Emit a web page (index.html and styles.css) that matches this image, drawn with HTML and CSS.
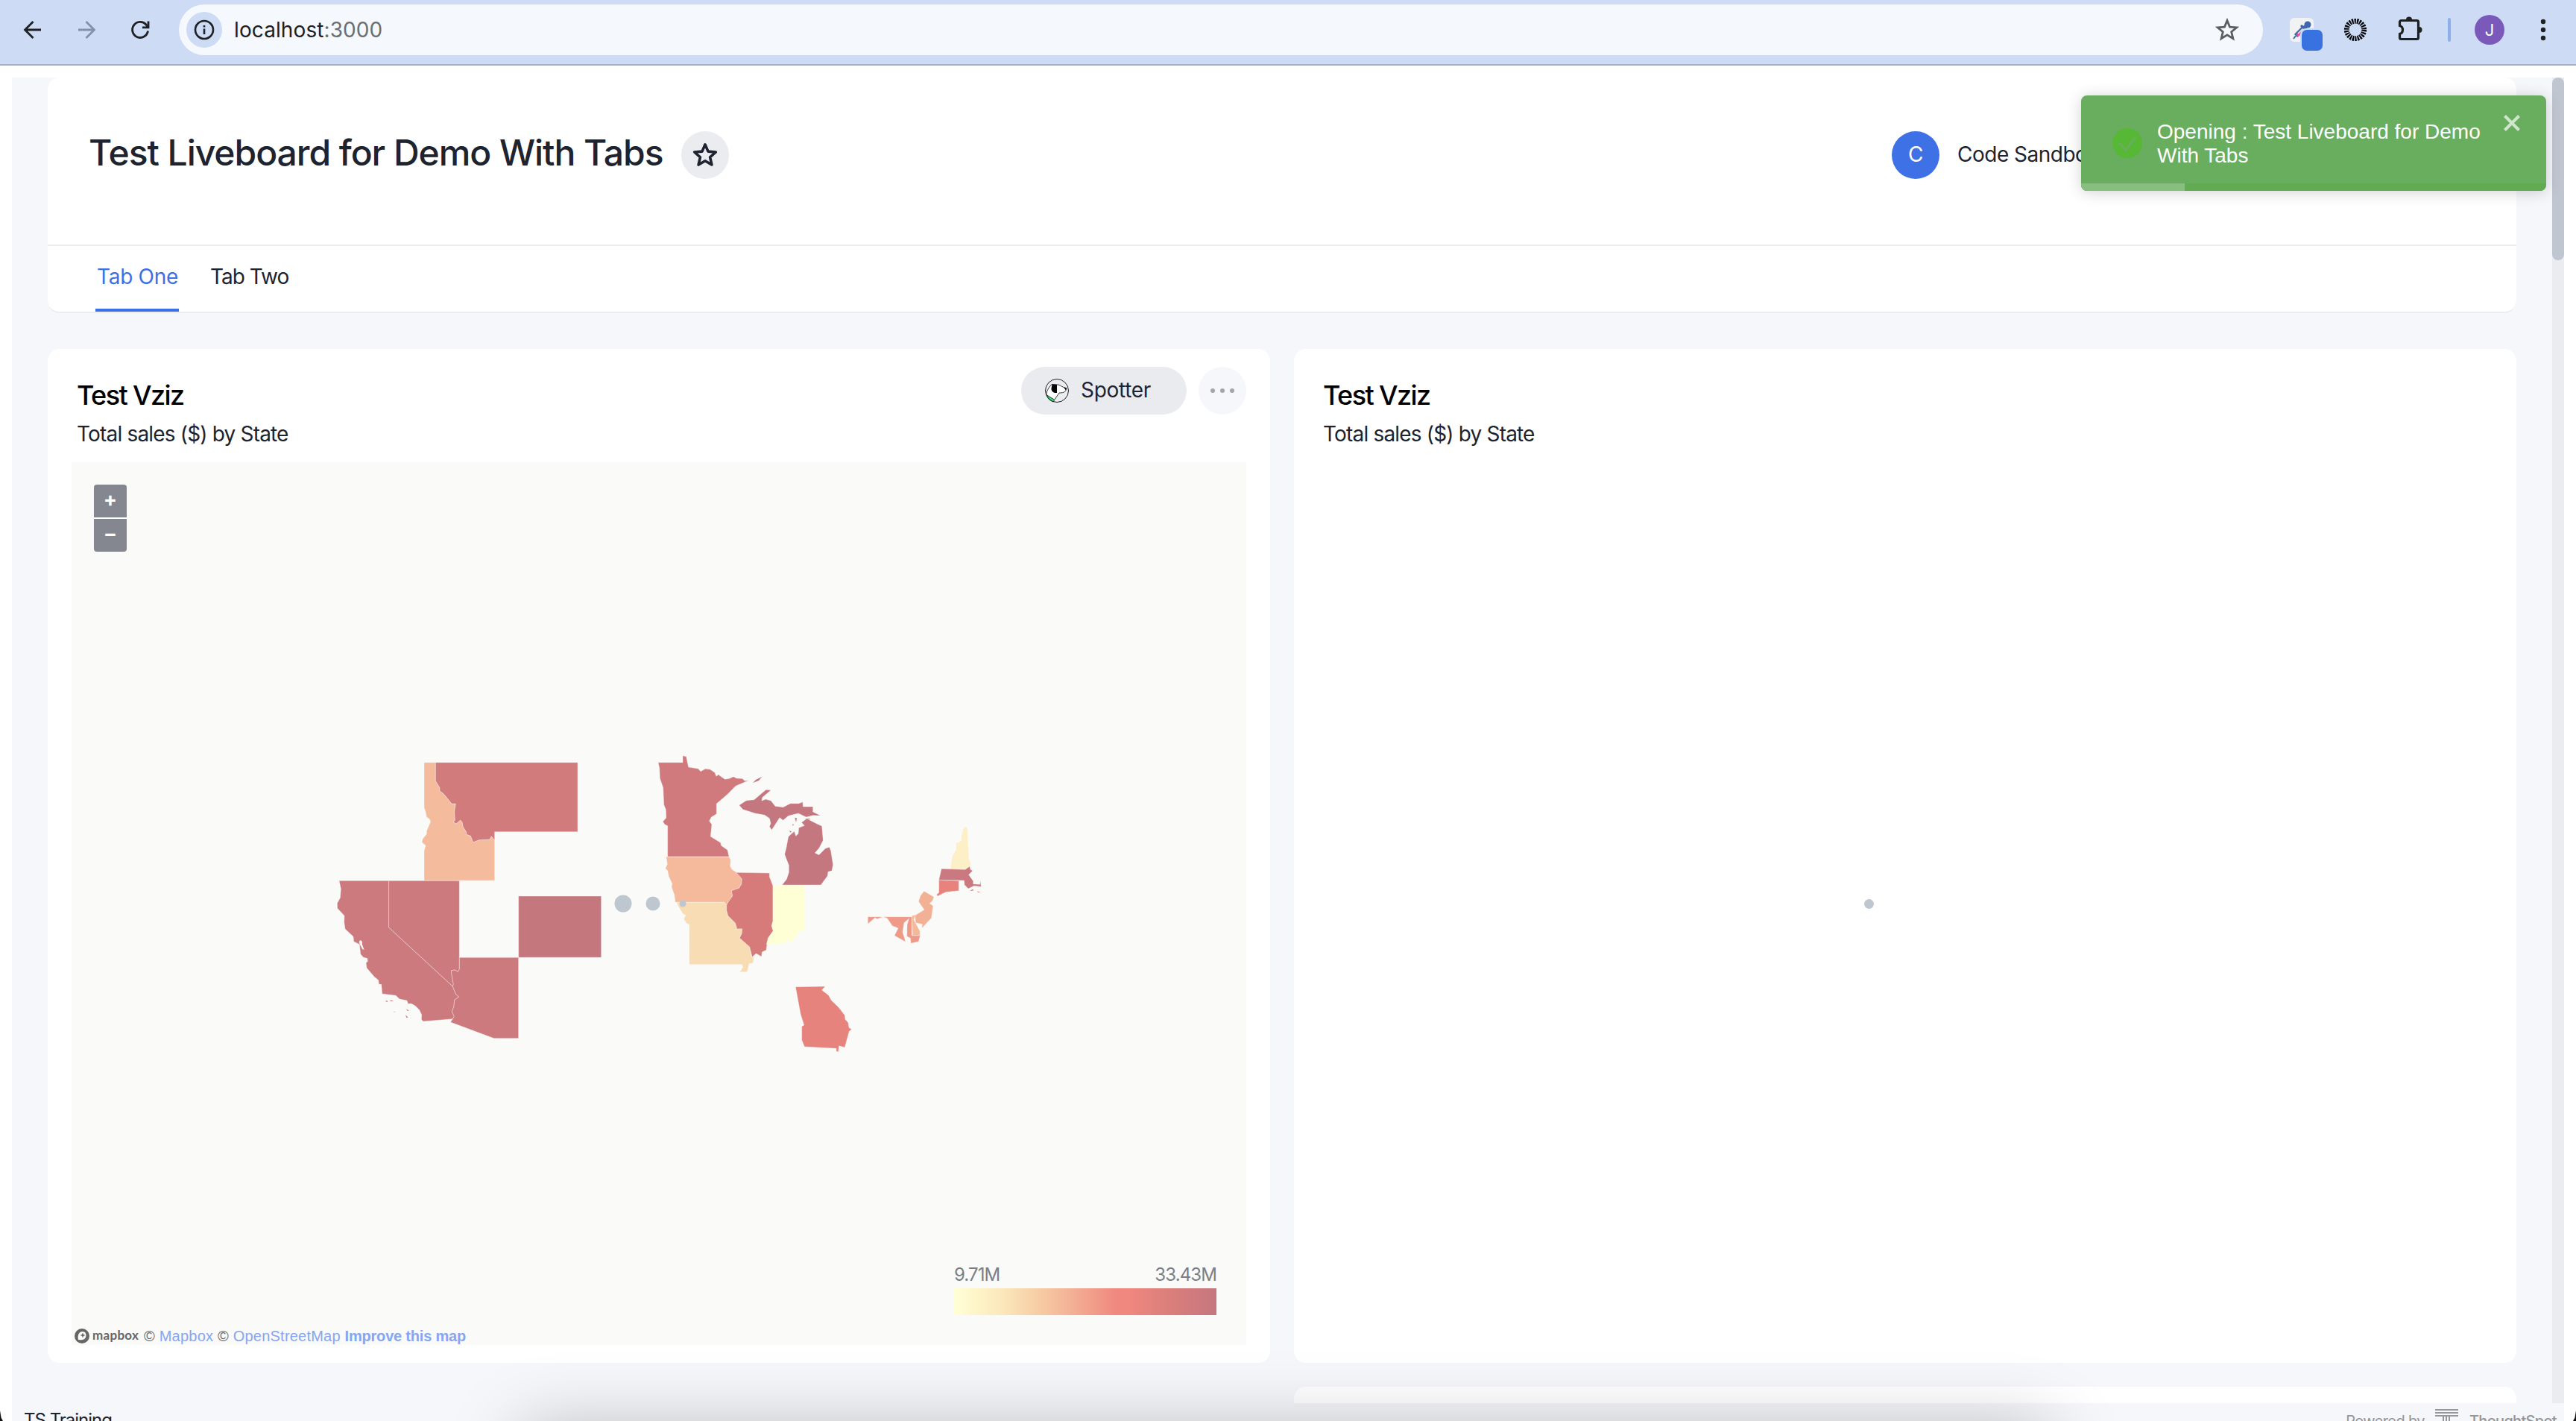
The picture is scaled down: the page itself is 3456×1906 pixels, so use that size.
FILE: index.html
```html
<!DOCTYPE html>
<html lang="en">
<head>
<meta charset="utf-8">
<title>localhost:3000</title>
<link rel="stylesheet" href="styles.css">
</head>
<body>
<div class="window">
  <header class="toolbar">
    <div class="nav">
      <svg width="32" height="32" viewBox="0 0 32 32" fill="none" stroke="#1f2023" stroke-width="2.8"><path d="M27 16H6M16.500 5L5.500 16l11 11"/></svg>
      <svg width="32" height="32" viewBox="0 0 32 32" fill="none" stroke="#8591a8" stroke-width="2.8"><path d="M5 16h21M15.500 5l11 11-11 11"/></svg>
      <svg width="32" height="32" viewBox="0 0 32 32" fill="none" stroke="#1f2023" stroke-width="2.800"><path d="M26.500 17.500A10.500 10.500 0 1 1 24 9l2 3"/><path d="M27 4.500V12.800H19" /></svg>
    </div>
    <div class="address">
      <span class="info"><svg width="28" height="28" viewBox="0 0 28 28" fill="none" stroke="#1f2023" stroke-width="2.600"><circle cx="14" cy="14" r="12"/><path d="M14 12.500v7.500M14 8v2.600"/></svg></span>
      <span class="url">localhost<span class="port">:3000</span></span>
      <svg class="bookmark" width="32" height="32" viewBox="0 0 32 32" fill="none" stroke="#5c5e62" stroke-width="2.800"><path d="M16 3.500l3.500 8.600 9.300.7-7.100 6 2.200 9L16 22.900l-7.900 4.900 2.200-9-7.100-6 9.300-.7z"/></svg>
    </div>
    <div class="extensions">
      <svg class="picker" width="44" height="44" viewBox="0 0 44 44"><rect width="32" height="32" rx="6" fill="#f1f2f4"/><path d="M8 24l12-12" stroke="#3f69ae" stroke-width="6"/><path d="M10 24l5-5" stroke="#f0508f" stroke-width="4"/><path d="M11 21l9-9" stroke="#f1f2f4" stroke-width="1.500"/><path d="M5 28l3-4" stroke="#3f69ae" stroke-width="2"/><path d="M15 10l8 8" stroke="#3f69ae" stroke-width="3"/><circle cx="24" cy="9" r="4.500" fill="#3f69ae"/><path d="M19 14l4-4" stroke="#3f69ae" stroke-width="5"/><rect x="14" y="14" width="32" height="32" rx="8" fill="#cddbf5"/><rect x="16" y="16" width="28" height="28" rx="7" fill="#3871e0"/></svg>
      <svg class="burst" width="32" height="32" viewBox="0 0 32 32" fill="none"><circle cx="16" cy="16" r="11.700" stroke="#08090b" stroke-width="6.800" stroke-dasharray="2.150 1.192"/></svg>
      <svg class="puzzle" width="36" height="36" viewBox="0 0 36 36"><path d="M3.500 12.500V7.500a2 2 0 0 1 2-2h21a2 2 0 0 1 2 2v21a2 2 0 0 1-2 2h-21a2 2 0 0 1-2-2v-5c5.300-1.500 5.300-9.500 0-11z" fill="none" stroke="#1f2023" stroke-width="3.200"/><path d="M12 4.500a4 4 0 0 1 8 0zM29.500 14a4 4 0 0 1 0 8z" fill="#1f2023"/></svg>
      <span class="sep"></span>
      <span class="profile">J</span>
      <svg class="kebab" width="8" height="32" viewBox="0 0 8 32" fill="#1f2023"><circle cx="4" cy="5" r="3.200"/><circle cx="4" cy="16" r="3.200"/><circle cx="4" cy="27" r="3.200"/></svg>
    </div>
  </header>

  <main class="app">
    <div class="scroller">
      <div class="content">
        <section class="head">
          <div class="head-top">
            <h1>Test Liveboard for Demo With Tabs</h1>
            <button class="round star"><svg width="36" height="36" viewBox="0 0 36 36" fill="none" stroke="#1d232f" stroke-width="3.600" stroke-linejoin="round"><path d="M18 3.800l4 9.300 10.300.9-7.700 6.800 2.300 10.200L18 25.700 9.100 31l2.300-10.200L3.700 14l10.300-.9z"/></svg></button>
            <div class="owner"><span class="avatar">C</span><span class="name">Code Sandbox</span></div>
          </div>
          <nav class="tabs"><a class="tab active">Tab One</a><a class="tab second">Tab Two</a></nav>
        </section>

        <section class="grid">
          <article class="card">
            <div class="card-head">
              <div><h2>Test Vziz</h2><p>Total sales ($) by State</p></div>
              <div class="actions">
                <button class="spotter">
                  <svg width="32" height="32" viewBox="0 0 32 32"><circle cx="16" cy="16" r="15.500" fill="#ebecf0"/><path d="M9 7.500l8 .5c3 0 5 3 11.500 4.500 0 5-3 6.500-9.500 6.500l-6.500 9.500L2 21.500C1.500 17 5 12 9 7.500z" fill="#fff" stroke="#222" stroke-width=".9"/><path d="M9.500 7.500l6.500.5v11c-4 .5-7.500-1.500-7.500-6z" fill="#050505"/><path d="M25 11.500l4 1-1 3z" fill="#050505"/><path d="M2.500 22.500l10 5.500-1 3C6.500 29.500 4 27 2.500 22.500z" fill="#43dc78" stroke="#143" stroke-width=".8"/><circle cx="16" cy="16" r="15.500" fill="none" stroke="#222" stroke-width="1"/></svg>
                  <span>Spotter</span>
                </button>
                <button class="more"><i></i><i></i><i></i></button>
              </div>
            </div>
            <div class="map">
              <svg class="states" viewBox="96 620 1576 1184">
                <g transform="translate(430 1000) scale(.33333)" stroke-width="3" stroke-opacity=".35" stroke="#fff">
                  <path fill="#f5bb9d" d="M417 68H463V142L480 170V182L497 196 528 234H544L539 265 541 300 535 308 546 315 563 300 570 308 574 328 587 348 588 358 604 364 614 389 638 380 680 378 688 365 701 382V543H417V423L423 402 408 389 411 376 427 356V344L443 306 438 295 427 288 422 263 417 252z"/>
                  <path fill="#d17b7d" d="M463 68H1035V347H701V382L688 365 680 378 638 380 614 389 604 364 588 358 587 348 574 328 570 308 563 300 546 315 535 308 541 300 539 265 544 234H528L497 196 480 182V170L463 142z"/>
                  <path fill="#cd7a7f" d="M75 544H275V732L532 969 545 1001 557 1011 539 1024 537 1050 529 1070 538 1090 532 1100 413 1110 406 1102 407 1083 398 1064 382 1048 366 1039H352L348 1026 318 1020 303 1006 248 999 245 961H235L233 944 216 930 186 895 183 875 190 868 188 856 173 853 161 839 157 800 134 789 132 769 99 738 95 710 96 685 68 655 67 635 79 613 82 577z"/>
                  <path fill="#cd7a7f" d="M275 544H559V900L553 910 540 903 526 906 530 935 535 960 532 969 275 732z"/>
                  <path fill="#cd7a7f" d="M559 853H797V1178H698L523 1113 532 1100 538 1090 529 1070 537 1050 539 1024 557 1011 545 1001 532 969 535 960 530 935 526 906 540 903 553 910 559 900z"/>
                  <path fill="#c5777e" d="M797 606H1130V853H797z"/>
                  <path fill="#fafaf8" stroke="none" d="M155 789l6-6 7 6-1 10 9 24-8-5-9-17z"/>
                  <path fill="#cd7a7f" stroke="none" d="M263 1026l8 2-3 5-5-4zM280 1025l14 1-6 3-8-1zM345 1059l11 8-6 1zM342 1084l11 10-7 1zM295 1069l6 4h-4z"/>
                </g>
                <g transform="translate(800 990) scale(.33333)" stroke-width="3" stroke-opacity=".35" stroke="#fff">
                  <path fill="#d07a7d" d="M249 98H348V71L362 74 371 117 410 123 420 134 438 124 458 126 477 139 483 154 491 147 518 166 535 163 552 155 565 162 588 163 597 172 614 170 561 193 527 227 484 264V305L463 318 455 334 465 347 460 396 500 421 503 433 528 450 534 477H287V353L275 347 268 336 281 321 280 288 272 268 269 200 256 161 254 120z"/>
                  <path fill="#f5ba9c" d="M281 478H534L541 490 539 515 545 527 563 540 586 567 584 588 575 603 544 614 548 635 530 661 524 672 515 661H318L314 630 303 600 305 585 292 558 287 533 278 524 286 507z"/>
                  <path fill="#f8dcb4" d="M322 661H515L524 672V692L530 715 560 745 566 768 587 767 586 785 577 805 617 840 624 879 634 883 631 905 615 908 607 941H577L590 923 586 911H374V750L364 747 352 728 360 713 349 707 334 684z"/>
                  <path fill="#d67b7a" d="M563 541L697 543 697 558 711 595V738L706 755 712 776 692 804 687 832 684 853 667 861 665 879 643 867 627 881 617 840 577 805 586 785 587 767 566 768 560 745 530 715 524 692V672L530 661 548 635 544 614 575 603 584 588 586 567z"/>
                  <path fill="#ffffd6" d="M711 593L726 597 750 588H840V773L814 780 802 804 783 824 768 811 758 827 742 824 732 832 715 825 702 832 685 830 692 804 712 776 706 755 711 738z"/>
                  <path fill="#c5777f" d="M575 270L604 251 635 248 683 208 703 209 668 239 666 252 682 246 703 252 720 274 752 278 781 263 815 263 831 257 832 276 872 276V297L903 312 872 311 845 318 813 303 773 313 752 331 738 320 706 370 697 356 702 343 697 323 678 310 640 303 590 287z"/>
                  <path fill="#c5777f" d="M826 340L847 324 888 345 908 354 913 412 896 444 880 462 896 470 922 444 938 439 944 453 953 510 948 534 933 538 931 554 904 591H748L766 568 775 540V512L758 468 764 444 773 397 786 385 797 375 803 394 813 385 815 361 838 352z"/>
                  <path fill="#c5777f" stroke="none" d="M630 180l12-12 25-13-13 16zM799 320l8 2-3 17zM790 345l5 3-4 6zM776 372l10 4-4 4zM840 323l20 1v4z"/>
                  <path fill="#e6837d" d="M802 1001L921 999 908 1014 935 1035 946 1055 975 1083 1000 1115 1002 1132 1014 1145 1017 1165 1028 1172 1018 1180 1000 1245 977 1238 974 1263 966 1260 966 1249 838 1242 827 1215V1160L836 1155 822 1110z"/>
                </g>
                <g transform="translate(1140 1080) scale(.33333)" stroke-width="3" stroke-opacity=".35" stroke="#fff">
                  <path fill="#fdefc6" d="M457 94L464 87 474 88 480 215 489 236 483 248 465 259H405L412 205 427 180 428 152 450 143 448 128z"/>
                  <path fill="#cb7980" d="M369 256L465 259 483 246 486 259 495 264 479 280 497 305V317L524 319 526 302 529 328 500 325 477 336 462 320 460 303 359 301z"/>
                  <path fill="#e7827d" d="M359 301L439 304V344L386 350 354 366 349 360 359 352z"/>
                  <path fill="#cb7980" stroke="none" d="M484 345l10-7 6 5zM514 347l13 2-12 2z"/>
                  <path fill="#ef9a89" d="M73 449H250V524H284L277 549 246 556 244 535 230 528 231 481 238 457 219 473 213 510 225 550 180 525 195 495 171 485 151 455 134 449 110 458 102 453 73 478z"/>
                  <path fill="#f4b99a" d="M250 445L265 441 258 461 283 507V524H253z"/>
                  <path fill="#f2b094" d="M299 346L339 369 334 384 322 395 336 405 329 454 290 495 292 479 265 473 263 443 300 421 277 388 284 365z"/>
                </g>
                <g fill="#bec6d0"><circle cx="836" cy="1212" r="11.500"/><circle cx="876" cy="1212" r="9.500"/><circle cx="916" cy="1212" r="4.500"/></g>
              </svg>
              <div class="zoom"><button>+</button><button>−</button></div>
              <div class="map-foot">
                <div class="credits">
                  <svg width="20" height="20" viewBox="0 0 20 20"><circle cx="10" cy="10" r="10" fill="#666"/><path d="M5 15c-1-5 0-11 6-11a5 5 0 0 1 4.500 5c0 6-5.500 7-10.500 6z" fill="#fafaf8"/><path d="M11 5.500l1 2.500 2.500 1-2.500 1-1 2.500-1-2.500-2.500-1 2.500-1z" fill="#666"/></svg>
                  <span class="wordmark">mapbox</span><span class="attrib">© <a>Mapbox</a> © <a>OpenStreetMap</a> <a class="improve">Improve this map</a></span>
                </div>
                <div class="legend">
                  <div class="range"><span>9.71M</span><span>33.43M</span></div>
                  <div class="ramp"></div>
                </div>
              </div>
            </div>
          </article>

          <article class="card">
            <div class="card-head"><div><h2>Test Vziz</h2><p>Total sales ($) by State</p></div></div>
            <div class="loading"><i></i></div>
          </article>
          <article class="card next"></article>
        </section>
      </div>
      <div class="scrollbar"><div class="thumb"></div></div>
    </div>
    <footer class="footer">
      <span class="org">TS Training</span>
      <div class="powered"><span class="by">Powered by</span>
        <svg width="32" height="32" viewBox="0 0 32 32" fill="#95979a"><path d="M0 0h31v2H0zM0 4h31v2H0zM0 8h31v2H0zM10 10h2v22h-2zM14 10h2v22h-2zM18 10h2v22h-2z"/></svg>
        <span class="brand">ThoughtSpot</span></div>
    </footer>
  </main>

  <div class="toast">
    <svg width="40" height="40" viewBox="0 0 40 40"><circle cx="20" cy="20" r="20" fill="#57b836"/><path d="M9 20l9 9 13-17" fill="none" stroke="#69ad5e" stroke-width="3"/></svg>
    <p>Opening : Test Liveboard for Demo With Tabs</p>
    <svg class="close" width="24" height="24" viewBox="0 0 24 24" stroke="#cfe5cc" stroke-width="4"><path d="M2.500 2.500l19 19M21.500 2.500l-19 19"/></svg>
    <div class="progress"><div class="done" style="width:139px"></div></div>
  </div>
  <div class="dock-shadow"></div>
  <i class="corner left"></i><i class="corner right"></i>
</div>
</body>
</html>
```

FILE: styles.css
```css
* { box-sizing: border-box; }
body { margin: 0; background: #fff; font-family: Inter, "Liberation Sans", sans-serif; color: #1d232f; }
h1, h2, p { margin: 0; }
button { border: 0; padding: 0; font: inherit; color: inherit; }
svg { display: block; flex: none; }
.window { position: relative; width: 3456px; height: 1906px; overflow: hidden; display: flex; flex-direction: column; }

.toolbar { height: 88px; flex: none; display: flex; background: #cddbf5; border-bottom: 2px solid #a8b1c9; }
.nav { width: 240px; height: 80px; display: flex; align-items: center; gap: 40px; padding-left: 28px; }
.address { width: 2796px; height: 68px; margin-top: 6px; border-radius: 34px; background: #f5f8fd; display: flex; align-items: center; padding: 0 32px 0 10px; }
.info { width: 48px; height: 48px; border-radius: 50%; background: #cddbf5; display: grid; place-items: center; }
.url { margin-left: 16px; font-size: 28px; line-height: 40px; letter-spacing: .1px; color: #1f2023; }
.port { color: #6b6e73; }
.bookmark { margin-left: auto; }
.extensions { flex: 1; height: 80px; display: flex; align-items: center; }
.picker { margin: 12px 0 0 36px; }
.burst { margin-left: 28px; }
.puzzle { margin-left: 40px; }
.sep { width: 4px; height: 32px; border-radius: 2px; background: #8eaee8; margin-left: 32px; }
.profile { width: 40px; height: 40px; margin-left: 32px; border-radius: 50%; background: #7b59bb; color: #fff; font-size: 22px; line-height: 40px; text-align: center; }
.kebab { margin-left: 48px; }

.app { margin: 16px 16px 0; flex: 1; min-height: 0; background: #f6f7fa; display: flex; flex-direction: column; }
.scroller { height: 1778px; flex: none; display: flex; overflow: hidden; }
.content { flex: 1; padding: 0 48px; }
.head { height: 316px; background: #fff; border-radius: 16px; border-bottom: 2px solid #ebecf0; }
.head-top { height: 226px; padding: 72px 56px 0 55px; display: flex; align-items: flex-start; border-bottom: 2px solid #ebecf0; }
h1 { font-size: 48px; line-height: 64px; font-weight: 500; letter-spacing: -1.04px; white-space: nowrap; width: 795px; margin-top: -3px; }
.round { width: 64px; height: 64px; border-radius: 50%; background: #ebecf0; display: grid; place-items: center; }
.owner { margin-left: 1560px; display: flex; gap: 24px; align-items: center; font-size: 28px; white-space: nowrap; letter-spacing: -.5px; }
.name { margin-top: -3px; }
.avatar { width: 64px; height: 64px; border-radius: 50%; background: #3e70e6; color: #fff; line-height: 62px; text-align: center; flex: none; }
.tabs { display: flex; gap: 40px; padding-left: 64px; height: 88px; }
.tab { height: 88px; padding: 0 2px; font-size: 28px; line-height: 82px; letter-spacing: -.3px; white-space: nowrap; }
.tab.active { width: 112px; color: #3c6fe8; border-bottom: 4px solid #3c6fe8; }
.tab.second { letter-spacing: -1px; }

.grid { display: grid; grid-template-columns: 1640px 1640px; grid-template-rows: 1360px 300px; gap: 32px; margin-top: 48px; }
.card { background: #fff; border-radius: 16px; padding: 0 32px; display: flex; flex-direction: column; }
.card.next { grid-column: 2; }
.card-head { height: 152px; padding: 24px 0 0 7px; display: flex; justify-content: space-between; }
h2 { margin-top: 16px; font-size: 36px; line-height: 44px; font-weight: 500; letter-spacing: -1.6px; color: #000; }
.card-head p { margin-top: 10px; font-size: 28px; line-height: 40px; letter-spacing: -.82px; }
.actions { display: flex; gap: 16px; }
.spotter { width: 222px; height: 64px; border-radius: 32px; background: #eaebef; display: flex; align-items: center; gap: 16px; padding-left: 32px; font-size: 28px; letter-spacing: -.3px; }
.spotter span { margin-top: -3px; }
.more { width: 64px; height: 64px; border-radius: 50%; background: #f6f7fa; display: flex; align-items: center; justify-content: center; gap: 7px; }
.more i { width: 6px; height: 6px; border-radius: 50%; background: #a3a5a9; }
.loading { flex: 1; padding: 118px 0 118px; display: flex; align-items: center; justify-content: center; }
.loading i { width: 13px; height: 13px; border-radius: 50%; background: #bec6d0; margin: 0 97px 24px 0; }

.map { display: grid; height: 1184px; background: #fafaf8; }
.map > * { grid-area: 1 / 1; }
.states { width: 1576px; height: 1184px; }
.zoom { margin: 30px 0 0 30px; display: flex; flex-direction: column; gap: 2px; width: 44px; height: 90px; border-radius: 4px; overflow: hidden; background: #fff; z-index: 1; }
.zoom button { height: 44px; background: #84878f; color: #fff; font-weight: 700; font-size: 27px; line-height: 40px; padding-bottom: 4px; }
.map-foot { align-self: end; display: flex; justify-content: space-between; align-items: flex-end; }
.credits { display: flex; align-items: center; height: 24px; padding-left: 4px; white-space: nowrap; }
.wordmark { margin-left: 4px; width: 69px; font: 700 17px/20px Lato, sans-serif; letter-spacing: .3px; color: #666; margin-top: -3px; }
.attrib { font: 20px/24px "Liberation Sans", sans-serif; letter-spacing: .22px; color: #666; }
.attrib a { color: #86a5f3; }
.attrib .improve { font-weight: 700; letter-spacing: -.2px; }
.legend { width: 352px; margin: 0 40px 40px 0; }
.range { display: flex; justify-content: space-between; font-size: 24px; line-height: 36px; letter-spacing: -.9px; color: #7a7f87; }
.ramp { height: 36px; background: linear-gradient(90deg, #ffffd6, #fbe8bb 18%, #f6c9a2 34%, #f08880 62%, #f08880 66%, #df807b 79%, #c5777f); }

.scrollbar { width: 16px; background: #ebecf0; }
.thumb { height: 245px; border-radius: 8px; background: #c0c6cf; }
.footer { flex: 1; display: flex; justify-content: space-between; overflow: hidden; padding: 8px 16px 0; height: 24px; }
.org { font-size: 24px; line-height: 40px; letter-spacing: -1px; margin-top: -5px; }
.powered { display: flex; align-items: flex-start; color: #939598; white-space: nowrap; }
.by { font-size: 20px; line-height: 28px; margin: 2px 14px 0 0; letter-spacing: -.6px; }
.brand { font-size: 20px; line-height: 28px; margin: 2px 0 0 14px; font-weight: 500; letter-spacing: -.7px; width: 111px; }

.toast { position: absolute; left: 2792px; top: 128px; width: 624px; height: 128px; border-radius: 8px; overflow: hidden; background: #69ad5e; display: flex; align-items: center; padding-left: 42px; color: #fff; }
.toast { box-shadow: 0 2px 20px rgba(0, 0, 0, .18); }
.toast p { margin: 2px 0 0 20px; width: 450px; font: 28px/32px "Liberation Sans", sans-serif; }
.close { align-self: flex-start; margin: 25px 0 0 14px; }
.progress { position: absolute; inset: auto 0 0 0; height: 10px; background: #63ab53; }
.done { height: 10px; background: #87bf7e; }
.dock-shadow { position: absolute; left: 700px; top: 1916px; width: 2050px; height: 300px; box-shadow: 0 0 90px rgba(0, 0, 0, .25); }
.corner { position: absolute; bottom: 0; width: 4px; height: 14px; background: #111; }
.left { left: 0; clip-path: polygon(0 0, 40% 70%, 100% 100%, 0 100%); }
.right { right: 0; clip-path: polygon(100% 0, 60% 70%, 0 100%, 100% 100%); }
```
